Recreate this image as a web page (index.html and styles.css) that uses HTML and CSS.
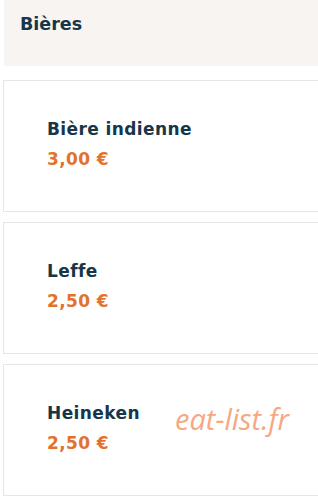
FILE: index.html
```html
<!DOCTYPE html>
<html lang="fr">
<head>
<meta charset="utf-8">
<title>Bières</title>
<link rel="stylesheet" href="styles.css">
</head>
<body>
<div class="menu">
  <div class="section-head">
    <h2 class="section-title">Bières</h2>
  </div>
  <div class="items">
    <div class="item">
      <div class="item-name">Bière indienne</div>
      <div class="item-price">3,00 €</div>
    </div>
    <div class="item">
      <div class="item-name">Leffe</div>
      <div class="item-price">2,50 €</div>
    </div>
    <div class="item">
      <div class="item-name">Heineken</div>
      <div class="item-price">2,50 €</div>
    </div>
  </div>
  <div class="watermark">eat-list.fr</div>
</div>
</body>
</html>
```
FILE: styles.css
```css
html, body {
  margin: 0;
  padding: 0;
  background: #ffffff;
}
body {
  font-family: "DejaVu Sans", "Noto Sans", sans-serif;
  overflow: hidden;
}
.menu {
  position: relative;
  width: 318px;
  height: 498px;
}
.section-head {
  margin-left: 4px;
  height: 66px;
  background: #f7f4f1;
  box-sizing: border-box;
  padding: 10px 0 0 16px;
}
.section-title {
  margin: 0;
  font-size: 17.5px;
  line-height: 28px;
  font-weight: 700;
  color: #17364a;
}
.items {
  display: flex;
  flex-direction: column;
  gap: 10px;
  margin-top: 14px;
  margin-left: 3px;
}
.item {
  height: 132px;
  box-sizing: border-box;
  border: 1px solid #e6e6e6;
  border-right: none;
  padding: 33px 0 0 43px;
}
.item-name {
  font-size: 17px;
  line-height: 30px;
  font-weight: 700;
  letter-spacing: 0.4px;
  color: #17364a;
}
.item-price {
  font-size: 17px;
  line-height: 30px;
  font-weight: 700;
  letter-spacing: 0.4px;
  color: #e2722d;
}
.watermark {
  position: absolute;
  left: 175px;
  top: 399px;
  font-family: "Open Sans", sans-serif;
  font-style: italic;
  font-size: 29px;
  line-height: 40px;
  color: #f5a882;
}
```
